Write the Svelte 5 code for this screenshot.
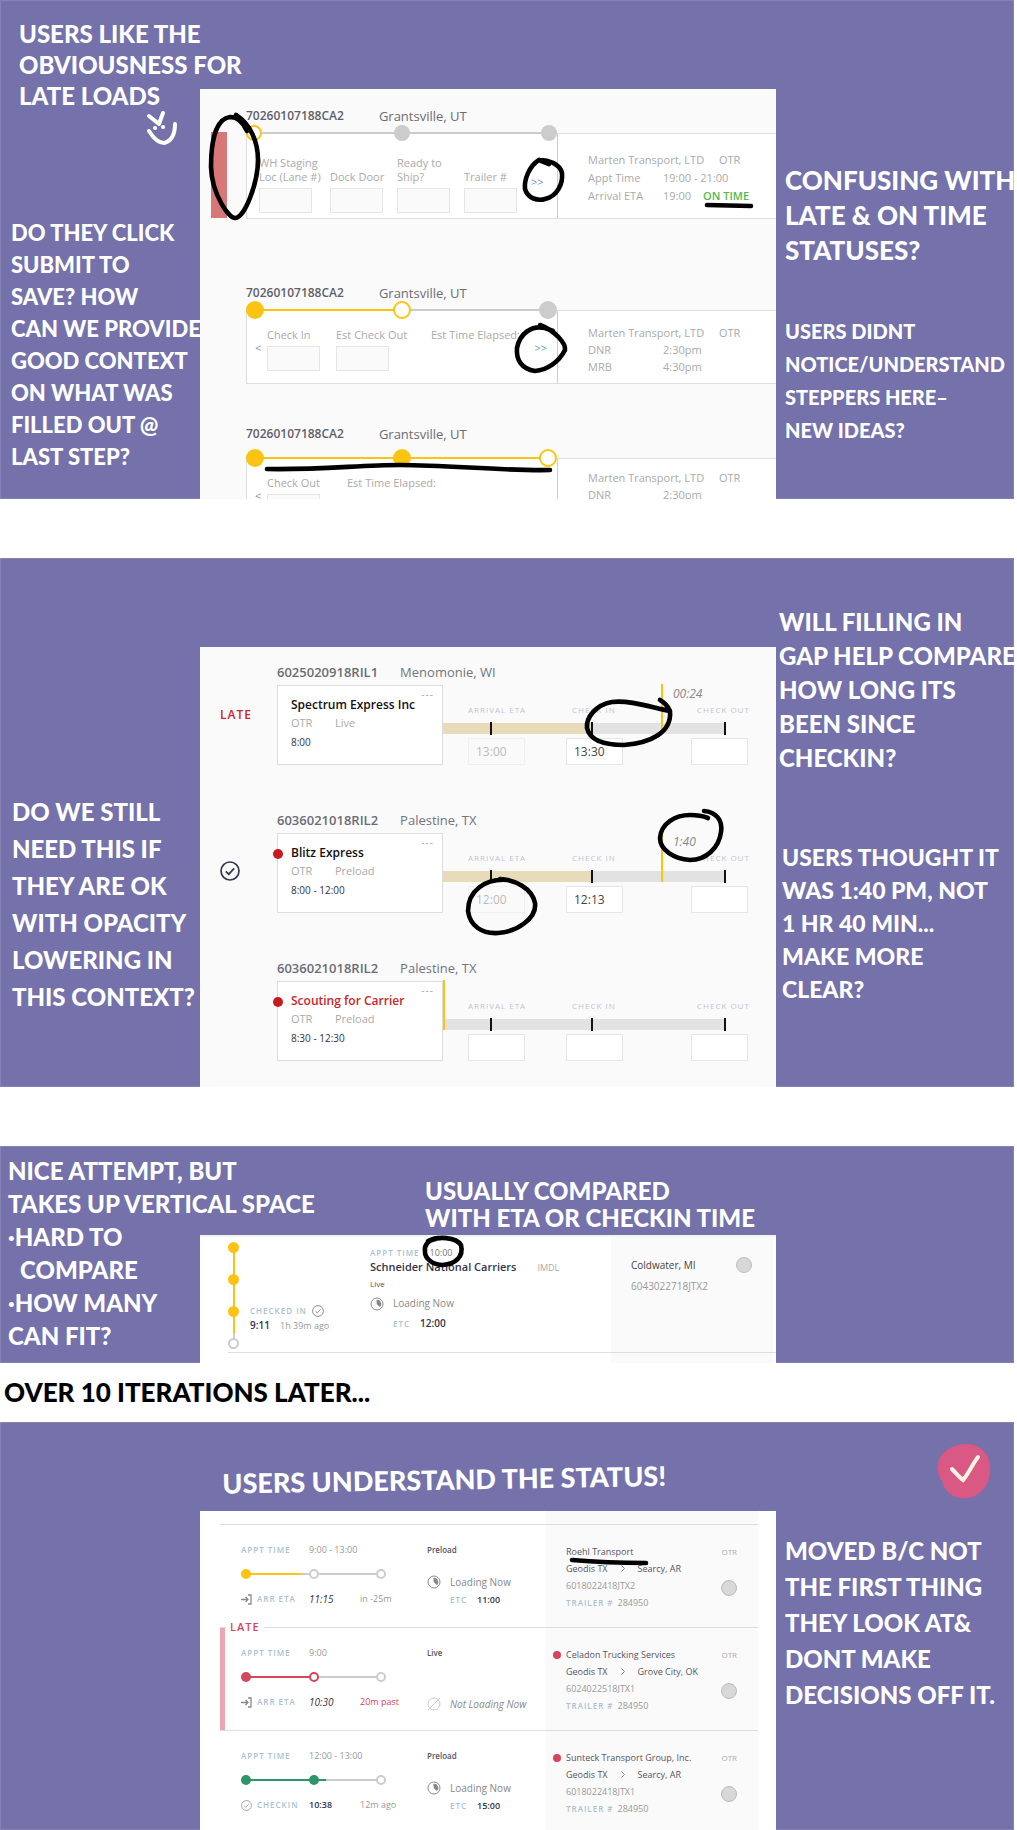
<script>
  const shipments = [
    {
      kind: 'staging', late: true, steps: ['open', 'idle', 'idle'], done: 0,
      fields: [
        { label: 'WH Staging\nLoc (Lane #)', input: true },
        { label: 'Dock Door', input: true },
        { label: 'Ready to\nShip?', input: true },
        { label: 'Trailer #', input: true }
      ],
      back: false, next: '>>',
      facts: [['Appt Time', '19:00 - 21:00', ''], ['Arrival ETA', '19:00', 'ON TIME']]
    },
    {
      kind: 'checkin', late: false, steps: ['full', 'open', 'idle'], done: 50,
      fields: [
        { label: 'Check In', input: true },
        { label: 'Est Check Out', input: true },
        { label: 'Est Time Elapsed:', input: false }
      ],
      back: true, next: '>>',
      facts: [['DNR', '2:30pm', ''], ['MRB', '4:30pm', '']]
    },
    {
      kind: 'checkout', late: false, steps: ['full', 'full', 'open'], done: 100,
      fields: [
        { label: 'Check Out', input: true },
        { label: 'Est Time Elapsed:', input: false }
      ],
      back: true, next: 'Done >>',
      facts: [['DNR', '2:30pm', '']]
    }
  ];

  const entries = [
    { id: '6025020918RIL1', place: 'Menomonie, WI', status: 'late', name: 'Spectrum Express Inc', mode: 'Live', time: '8:00', alert: false, scouting: false, fill: 149, now: 219, elapsed: '00:24', eta: '13:00', checkin: '13:30' },
    { id: '6036021018RIL2', place: 'Palestine, TX', status: 'ok', name: 'Blitz Express', mode: 'Preload', time: '8:00 - 12:00', alert: true, scouting: false, fill: 149, now: 219, elapsed: '1:40', eta: '12:00', checkin: '12:13' },
    { id: '6036021018RIL2', place: 'Palestine, TX', status: '', name: 'Scouting for Carrier', mode: 'Preload', time: '8:30 - 12:30', alert: true, scouting: true, fill: 0, now: 1, elapsed: '', eta: '', checkin: '' }
  ];
  const ticks = [48, 149, 282];

  const loads = [
    { late: false, tone: 'yellow', appt: '9:00 - 13:00', steps: ['full', 'idle', 'idle'], done: 40, event: 'ARR ETA', at: '11:15', est: true, delta: 'in -25m', mode: 'Preload', loading: true, etc: '11:00', carrier: 'Roehl Transport', alert: false, to: 'Searcy, AR', id: '6018022418JTX2' },
    { late: true, tone: 'red', appt: '9:00', steps: ['full', 'open', 'idle'], done: 50, event: 'ARR ETA', at: '10:30', est: true, delta: '20m past', mode: 'Live', loading: false, etc: '', carrier: 'Celadon Trucking Services', alert: true, to: 'Grove City, OK', id: '6024022518JTX1' },
    { late: false, tone: 'green', appt: '12:00 - 13:00', steps: ['full', 'full', 'idle'], done: 60, event: 'CHECKIN', at: '10:38', est: false, delta: '12m ago', mode: 'Preload', loading: true, etc: '15:00', carrier: 'Sunteck Transport Group, Inc.', alert: true, to: 'Searcy, AR', id: '6018022418JTX1' }
  ];
</script>

{#snippet note(lines)}
  {#each lines as line}<span>{line}</span>{/each}
{/snippet}

{#snippet checkIcon(size)}
  <svg class="icon" width={size} height={size} viewBox="0 0 20 20" aria-hidden="true">
    <circle cx="10" cy="10" r="9" /><path d="M5.8 10.4l3 2.8 5.4-5.8" />
  </svg>
{/snippet}

{#snippet clockIcon()}
  <svg class="icon clock" width="14" height="14" viewBox="0 0 14 14" aria-hidden="true">
    <circle cx="7" cy="7" r="6" /><path class="solid" d="M6.4 3A4 4 0 0 1 9.8 10L6.8 7.2z" />
  </svg>
{/snippet}

<main>
  <section class="board first">
    <div class="side">
      <p class="note large">{@render note(['USERS LIKE THE', 'OBVIOUSNESS FOR', 'LATE LOADS'])}</p>
      <p class="note submit">{@render note(['DO THEY CLICK', 'SUBMIT TO', 'SAVE? HOW', 'CAN WE PROVIDE', 'GOOD CONTEXT', 'ON WHAT WAS', 'FILLED OUT @', 'LAST STEP?'])}</p>
    </div>
    <div class="middle">
      <div class="lead"></div>
      <div class="panel shipments">
        {#each shipments as s}
          <article class="shipment {s.kind}">
            <h3><b>70260107188CA2</b><span>Grantsville, UT</span></h3>
            <div class="shipcard" class:late={s.late}>
              <div class="work">
                <div class="stepper">
                  <i class="line"><i style="width:{s.done}%"></i></i>
                  {#each s.steps as step}<i class="dot {step}"></i>{/each}
                </div>
                <div class="form">
                  {#if s.back}<button class="back" aria-label="Previous step">&lt;</button>{/if}
                  {#each s.fields as f}
                    {#if f.input}
                      <label class="field"><span>{f.label}</span><input type="text" /></label>
                    {:else}
                      <span class="field plain">{f.label}</span>
                    {/if}
                  {/each}
                  <button class="next">{s.next}</button>
                </div>
              </div>
              <div class="facts">
                <span class="wide">Marten Transport, LTD</span><span class="mode">OTR</span>
                {#each s.facts as [k, v, ok]}
                  <span>{k}</span><span class="val">{v}{#if ok}<b>{ok}</b>{/if}</span>
                {/each}
              </div>
            </div>
          </article>
        {/each}
      </div>
    </div>
    <div class="side">
      <p class="note confusing">{@render note(['CONFUSING WITH', 'LATE & ON TIME', 'STATUSES?'])}</p>
      <p class="note steppers">{@render note(['USERS DIDNT', 'NOTICE/UNDERSTAND', 'STEPPERS HERE–', 'NEW IDEAS?'])}</p>
    </div>
    <svg class="ink" aria-hidden="true">
      <path d="M247 131C243 122 237 117 230 117C214 119 211 147 211 167C212 195 229 218 235 218C245 218 258 182 258 160C258 141 250 124 236 115L248 127" />
      <path d="M539 160C529 166 524 180 525 189C528 199 538 201 545 199C558 196 563 183 562 173C560 164 549 160 539 160L549 164" />
      <path d="M707 205L751 206" />
      <path d="M540 325C556 331 566 344 565 350C559 362 547 370 535 371C521 369 516 359 517 348C520 333 532 325 545 328L553 331" />
      <path d="M267 469C320 470 360 465 400 465C450 465 500 471 550 470" />
      <g class="chalk">
        <path d="M149 116L159 124L163 113M149 131C154 139 159 143 164 143C172 141 175 133 175 124" />
        <path d="M155 128h.1M163 127h.1" />
      </g>
    </svg>
  </section>

  <section class="board second">
    <div class="side">
      <p class="note opacity">{@render note(['DO WE STILL', 'NEED THIS IF', 'THEY ARE OK', 'WITH OPACITY', 'LOWERING IN', 'THIS CONTEXT?'])}</p>
    </div>
    <div class="middle">
      <div class="lead"></div>
      <div class="panel entries">
        {#each entries as e}
          <article class="entry">
            <h3><b>{e.id}</b><span>{e.place}</span></h3>
            <div class="status">
              {#if e.status === 'late'}LATE{:else if e.status === 'ok'}{@render checkIcon(20)}{/if}
            </div>
            <div class="carrier" class:scouting={e.scouting}>
              {#if e.alert}<i class="alert"></i>{/if}
              <button class="more" aria-label="More options">---</button>
              <strong>{e.name}</strong>
              <p><span>OTR</span><span>{e.mode}</span></p>
              <time>{e.time}</time>
            </div>
            <div class="timeline">
              <div class="cells names"><span>ARRIVAL ETA</span><span>CHECK IN</span><span>CHECK OUT</span></div>
              <div class="bar">
                <i class="fill" style="width:{e.fill}px"></i>
                {#each ticks as t}<i class="tick" style="left:{t}px"></i>{/each}
                <i class="now" style="left:{e.now}px"></i>
                {#if e.elapsed}<em style="left:{e.now + 11}px">{e.elapsed}</em>{/if}
              </div>
              <div class="cells">
                <input class:dim={e.eta} aria-label="Arrival ETA" value={e.eta} />
                <input aria-label="Check in" value={e.checkin} />
                <input aria-label="Check out" />
              </div>
            </div>
          </article>
        {/each}
      </div>
    </div>
    <div class="side">
      <p class="note gap">{@render note(['WILL FILLING IN', 'GAP HELP COMPARE', 'HOW LONG ITS', 'BEEN SINCE', 'CHECKIN?'])}</p>
      <p class="note clear">{@render note(['USERS THOUGHT IT', 'WAS 1:40 PM, NOT', '1 HR 40 MIN...', 'MAKE MORE', 'CLEAR?'])}</p>
    </div>
    <svg class="ink" aria-hidden="true">
      <path d="M660 142Q667 146 670 153C650 149 630 142 612 144C595 147 586 160 587 170C590 183 605 187 624 187C650 185 672 175 670 153" />
      <path d="M704 253C716 254 723 262 721 274C719 290 706 302 690 302C674 301 660 292 660 280C661 265 676 257 690 257C697 257 703 258 708 260" />
      <path d="M508 322C485 320 468 333 468 353C470 368 482 376 498 375C517 374 537 360 535 345C532 330 515 322 500 321" />
    </svg>
  </section>

  <section class="board third">
    <div class="side">
      <p class="note attempt">{@render note(['NICE ATTEMPT, BUT', 'TAKES UP VERTICAL SPACE'])}<span class="point">·HARD TO</span><span class="point in">COMPARE</span><span class="point">·HOW MANY</span><span class="point">CAN FIT?</span></p>
    </div>
    <div class="middle">
      <div class="lead">
        <p class="note compared">{@render note(['USUALLY COMPARED', 'WITH ETA OR CHECKIN TIME'])}</p>
      </div>
      <div class="panel vertical">
        <div class="vsteps">
          <i class="vline"></i>
          <i class="dot full"></i><i class="dot full"></i><i class="dot full"></i><i class="dot idle"></i>
        </div>
        <div class="checked">
          <p class="key">CHECKED IN {@render checkIcon(12)}</p>
          <p><b>9:11</b><small>1h 39m ago</small></p>
        </div>
        <div class="freight">
          <p><span class="key">APPT TIME</span><small class="dark">10:00</small></p>
          <p class="title"><strong>Schneider National Carriers</strong><small>IMDL</small></p>
          <p class="live">Live</p>
          <p class="loading">{@render clockIcon()}<span>Loading Now</span></p>
          <p class="etc"><span class="key">ETC</span><b>12:00</b></p>
        </div>
        <div class="dest">
          <p>Coldwater, MI<i class="spot"></i></p>
          <span>6043022718JTX2</span>
        </div>
      </div>
    </div>
    <div class="side"></div>
    <svg class="ink" aria-hidden="true">
      <path d="M428 95C438 90 456 91 461 99C464 111 455 118 443 119C432 119 425 112 425 106C424 99 428 94 436 93" />
    </svg>
  </section>

  <p class="later">OVER 10 ITERATIONS LATER...</p>

  <section class="board fourth">
    <div class="side"></div>
    <div class="middle">
      <div class="lead">
        <h2 class="note understand">USERS UNDERSTAND THE STATUS!</h2>
      </div>
      <div class="panel loads">
        {#each loads as l}
          <article class="load {l.tone}" class:overdue={l.late}>
            {#if l.late}<strong class="flag">LATE</strong>{/if}
            <div class="visit">
              <span class="key">APPT TIME</span><span class="appt">{l.appt}</span>
              <div class="stepper small">
                <i class="line"><i style="width:{l.done}%"></i></i>
                {#each l.steps as step}<i class="dot {step}"></i>{/each}
              </div>
              <span class="key event">
                {#if l.est}
                  <svg class="icon" width="11" height="11" viewBox="0 0 11 11" aria-hidden="true"><path d="M0 5.5h7M4.5 3L7 5.5 4.5 8M7 1h3v9H7" /></svg>
                {:else}{@render checkIcon(11)}{/if}
                {l.event}
              </span>
              <b class:est={l.est}>{l.at}</b>
              <span class="delta">{l.delta}</span>
            </div>
            <div class="work-state">
              <strong>{l.mode}</strong>
              {#if l.loading}
                <p class="loading">{@render clockIcon()}<span>Loading Now</span></p>
                <p class="etc"><span class="key">ETC</span><b>{l.etc}</b></p>
              {:else}
                <p class="loading not">
                  <svg class="icon clock" width="14" height="14" viewBox="0 0 14 14" aria-hidden="true"><circle cx="7" cy="7" r="6" /><path d="M13 1L1 13" /></svg>
                  <em>Not Loading Now</em>
                </p>
              {/if}
            </div>
            <div class="haul">
              <div class="who">
                {#if l.alert}<i class="alert"></i>{/if}
                <p>{l.carrier}</p>
                <p class="route"><span>Geodis TX</span><svg class="icon" width="4" height="7" viewBox="0 0 4 7" aria-hidden="true"><path d="M.5 .5L3.5 3.5 .5 6.5" /></svg><span>{l.to}</span></p>
                <p class="id">{l.id}</p>
                <p class="id"><span class="key">TRAILER #</span>284950</p>
              </div>
              <div class="tag"><span>OTR</span><i class="spot"></i></div>
            </div>
          </article>
        {/each}
      </div>
    </div>
    <div class="side">
      <svg class="badge" width="54" height="56" viewBox="0 0 54 56" role="img" aria-label="Approved">
        <path class="blob" d="M15 4C28-2 47 0 52 17C56 31 50 52 31 55C16 57 7 48 5 38C-3 28-1 11 15 4Z" />
        <path class="tick-mark" d="M15 26C19 30 22 34 26 37C31 32 36 20 41 14" />
      </svg>
      <p class="note moved">{@render note(['MOVED B/C NOT', 'THE FIRST THING', 'THEY LOOK AT&', 'DONT MAKE', 'DECISIONS OFF IT.'])}</p>
    </div>
    <svg class="ink" aria-hidden="true"><path d="M572 138C595 140 620 141 646 141" /></svg>
  </section>
</main>

<style>
  :global(body) { margin: 0; background: #fff; }
  main { font-family: "Open Sans", "Noto Sans", sans-serif; font-size: 10px; color: #aaa; padding-right: 3px; overflow: hidden; }
  p, h2, h3 { margin: 0; font-weight: 400; }
  i { font-style: normal; display: block; }
  input { box-sizing: border-box; border: 1px solid #e6e6e6; border-radius: 0; background: #fafafa; font: inherit; }
  button { border: 0; background: none; padding: 0; font: inherit; color: #6f93c4; }

  .board { position: relative; display: grid; grid-template-columns: 200px minmax(0, 1fr) 238px; background: #7471ab; margin-bottom: 59px; overflow: hidden; box-shadow: inset 0 0 0 1px #8583b6; }
  .board.third { margin-bottom: 0; }
  .board.fourth { margin-bottom: 0; }
  .middle { display: flex; flex-direction: column; }
  .lead { height: 89px; box-sizing: border-box; }
  .panel { box-sizing: border-box; background: #fafafa; overflow: hidden; }
  .side { position: relative; z-index: 1; min-width: 0; }

  .note { font-family: Lato, "Open Sans", sans-serif; font-weight: 900; font-size: 24px; line-height: 33px; color: #fff; white-space: nowrap; }
  .note span { display: block; }
  .large { line-height: 31px; padding: 18px 0 0 19px; }
  .submit { line-height: 32px; font-size: 22px; padding: 106px 0 0 11px; }
  .confusing { font-size: 26px; line-height: 35px; padding: 163px 0 0 9px; }
  .steppers { font-size: 20px; padding: 47px 0 0 9px; }
  .opacity { line-height: 37px; padding: 235px 0 0 12px; }
  .gap { line-height: 34px; padding: 47px 0 0 3px; }
  .clear { font-size: 23px; padding: 66px 0 0 6px; }
  .attempt { padding: 8px 0 0 8px; }
  .point.in { padding-left: 12px; }
  .compared { line-height: 27px; padding: 31px 0 0 225px; }
  .understand { font-size: 27px; line-height: 36px; padding: 39px 0 0 22px; transform: rotate(-1deg); }
  .moved { line-height: 36px; padding: 34px 0 0 9px; }
  .later { font-family: Lato, "Open Sans", sans-serif; font-weight: 900; font-size: 26px; line-height: 59px; color: #000; padding-left: 4px; }

  .ink { position: absolute; top: 0; left: 0; width: 100%; height: 100%; z-index: 2; pointer-events: none; fill: none; stroke: #000; stroke-width: 4.6; stroke-linecap: round; stroke-linejoin: round; }
  .chalk { stroke: #fff; stroke-width: 4; }
  .icon { fill: none; stroke: #8a8a8a; stroke-width: 1; flex: none; }

  .dot { position: relative; box-sizing: border-box; width: 18px; height: 18px; border-radius: 50%; background: #ccc; }
  .dot.full { background: #fbc412; }
  .dot.open { background: #fff; border: 2px solid #fbc412; }
  .stepper { position: relative; display: flex; justify-content: space-between; align-items: center; }
  .stepper > .line { position: absolute; left: 8px; right: 8px; top: 50%; height: 2px; margin-top: -1px; background: #ccc; }
  .line > i { height: 100%; background: #fbc412; }

  .first .panel { height: 410px; }
  .shipments { padding: 18px 0 0 46px; font-size: 11px; }
  .shipments h3 { display: flex; gap: 35px; font-size: 12px; line-height: 18px; color: #6c6c74; }
  .shipments h3 span { font-size: 13px; }
  h3 b { font-weight: 600; }
  .shipcard { position: relative; display: grid; grid-template-columns: 311px minmax(0, 1fr); background: #fff; border: 1px solid #dedede; border-right: 0; box-sizing: border-box; }
  .shipcard.late::before { content: ""; position: absolute; right: 100%; top: -2px; bottom: 0; width: 16px; margin-right: 20px; background: #d77777; }
  .staging .shipcard { height: 86px; margin: 8px 0 65px; }
  .checkin .shipcard { height: 74px; margin: 8px 0 41px; }
  .checkout .shipcard { height: 74px; margin-top: 15px; }
  .work { border-right: 1px solid #ccc; }
  .work .stepper { margin: -10px 0 0 -1px; height: 18px; }
  .staging .work .dot { width: 16px; height: 16px; }
  .form { display: flex; align-items: flex-start; padding-left: 20px; }
  .checkin .form, .checkout .form { padding-left: 8px; padding-top: 9px; }
  .field { display: flex; flex-direction: column; justify-content: flex-end; line-height: 14px; width: 53px; margin-right: 16px; white-space: pre; }
  .field input { width: 53px; height: 25px; margin-top: 4px; }
  .staging .form { padding: 10px 0 0 12px; }
  .staging .field { height: 61px; margin-right: 14px; }
  .staging .field:first-child { margin-right: 18px; }
  .plain { padding-left: 26px; width: auto; margin-right: 0; }
  .checkout .plain { padding-left: 11px; }
  .back { width: 6px; margin: 13px 6px 0 0; line-height: 14px; }
  .next { line-height: 14px; margin: 13px 10px 0 auto; }
  .checkin .next { margin-left: 0; position: relative; margin-right: 10px; margin-left: auto; }
  .staging .next { margin: 23px 16px 0 auto; }
  .checkout .next { font-weight: 600; margin: 20px 20px 0 auto; }
  .facts { display: grid; grid-template-columns: 75px 56px 1fr; grid-auto-rows: 17px; align-content: start; line-height: 17px; padding: 13px 0 0 30px; white-space: nowrap; }
  .wide { grid-column: 1 / 3; }
  .staging .facts { padding-top: 17px; row-gap: 1px; }
  .checkout .facts { padding-top: 10px; }
  .val { grid-column: 2 / 4; }
  .val b { color: #55b84c; font-weight: 600; margin-left: 12px; }

  .second .panel { height: 440px; }
  .entries { padding: 15px 28px 0 20px; }
  .entry { display: grid; grid-template-columns: 57px 166px minmax(0, 1fr); height: 148px; align-content: start; }
  .entry h3 { grid-column: 2 / 4; display: flex; gap: 22px; font-size: 13px; line-height: 20px; margin-bottom: 3px; color: #74747c; }
  .status { color: #c9252b; font-size: 12px; font-weight: 600; letter-spacing: 1px; line-height: 14px; padding-top: 23px; }
  .status .icon { stroke: #33384a; stroke-width: 1.7; margin-top: 5px; }
  .carrier { position: relative; box-sizing: border-box; height: 80px; background: #fff; border: 1px solid #ddd; padding: 9px 13px; font-size: 11px; line-height: 17px; display: flex; flex-direction: column; white-space: nowrap; }
  .carrier strong { color: #111; font-weight: 600; line-height: 19px; font-size: 12px; }
  .carrier.scouting strong { color: #c9252b; }
  .carrier p span { display: inline-block; min-width: 44px; }
  .carrier time { color: #333; font-size: 10px; line-height: 22px; }
  .alert { position: absolute; left: -5px; top: 15px; width: 10px; height: 10px; border-radius: 50%; background: #c9191e; }
  .more { position: absolute; right: 8px; top: 1px; line-height: 14px; color: #aaa; font-size: 10px; letter-spacing: 1px; }
  .timeline { padding-top: 19px; }
  .cells { display: grid; grid-template-columns: 98px 125px 57px; padding-left: 25px; }
  .names { font-size: 8px; line-height: 12px; letter-spacing: 1px; color: #bcc5d6; white-space: nowrap; }
  .names span:nth-child(n + 2) { padding-left: 6px; }
  .bar { position: relative; width: 282px; height: 11px; background: #e2e2e2; margin: 7px 0 4px; }
  .fill { height: 100%; background: #e8dbb9; }
  .tick, .now { position: absolute; top: -1px; width: 2px; height: 13px; background: #111; margin-left: -1px; }
  .now { top: -39px; height: 50px; background: #fbc412; }
  .bar em { position: absolute; top: -37px; font-size: 12px; line-height: 16px; color: #888; }
  .cells input { width: 57px; height: 27px; padding: 0 7px; background: #fff; font-size: 12px; color: #444; }
  .cells .dim { background: #fafafa; border-color: #f0f0f0; color: #bbb; }

  .key { color: #a9c1d2; font-weight: 600; font-size: 8px; letter-spacing: 1px; }
  b { font-weight: 600; }
  small { font-size: 9px; }
  .panel .spot { box-sizing: border-box; width: 16px; height: 16px; border-radius: 50%; background: #d8d8d8; border: 1px solid #bbb; }
  .vertical { display: grid; grid-template-columns: 22px 120px minmax(0, 1fr) 162px; background: #fff; height: 128px; padding: 0 3px 0 28px; border-top: 2px solid #f3f3f5; background-image: linear-gradient(#ddd, #ddd); background-size: calc(100% - 28px) 1px; background-position: right 115px; background-repeat: no-repeat; }
  .vsteps { position: relative; display: flex; flex-direction: column; gap: 21px; padding-top: 5px; }
  .vsteps .dot { width: 11px; height: 11px; }
  .dot.idle { background: #ccc; }
  .vsteps .idle { background: #fff; border: 2px solid #ccc; }
  .vline { position: absolute; top: 12px; left: 5px; width: 2px; height: 84px; background: #fbc412; border-bottom: 8px solid #ccc; }
  .checked { padding-top: 67px; line-height: 14px; color: #999; white-space: nowrap; }
  .checked .key { display: flex; gap: 5px; align-items: center; }
  .checked .icon { stroke-width: 1.6; }
  .checked b { display: inline-block; width: 30px; }
  .panel b { color: #33354a; }
  .panel .shipment h3 b { color: #5f5f69; }
  .panel .entry h3 b { color: #6c6c76; }
  .panel .val b { color: #55b84c; }
  .freight { padding-top: 8px; line-height: 14px; white-space: nowrap; }
  .freight .key + .dark { margin-left: 10px; color: #777; }
  .title strong { color: #33354a; font-size: 11px; font-weight: 600; }
  .title small { margin-left: 21px; }
  .live { color: #555; font-size: 8px; line-height: 17px; }
  .loading { display: flex; align-items: center; gap: 9px; color: #888; }
  .clock .solid { fill: #888; stroke: none; }
  .etc { padding-left: 23px; display: flex; gap: 10px; align-items: center; }
  .freight .loading { line-height: 23px; }
  .freight .etc { line-height: 17px; }
  .dest { background: #fafafa; padding: 20px 21px 0 20px; color: #999; background-image: linear-gradient(#ddd, #ddd); background-size: 100% 1px; background-position: 0 115px; background-repeat: no-repeat; }
  .dest p { display: flex; justify-content: space-between; color: #444; line-height: 16px; margin-bottom: 6px; }
  .dest span { line-height: 14px; }

  .loads { background: #fff; height: 319px; padding: 13px 18px 0 20px; background-image: linear-gradient(#fafafa, #fafafa); background-size: 212px 100%; background-position: right 18px top; background-repeat: no-repeat; }
  .load { position: relative; box-sizing: border-box; display: grid; grid-template-columns: 207px minmax(0, 1fr) 212px; height: 103px; border-top: 1px solid #ddd; }
  .overdue::before { content: ""; position: absolute; left: 0; top: 0; bottom: 0; width: 5px; background: #eba7b0; }
  .flag { position: absolute; left: 6px; top: -8px; background: #fff; padding: 0 4px; line-height: 14px; font-size: 11px; font-weight: 600; letter-spacing: 1px; color: #d5455b; }
  .visit { display: grid; grid-template-columns: 68px 51px 1fr; align-content: start; align-items: center; padding: 18px 0 0 21px; line-height: 14px; white-space: nowrap; }
  .appt { grid-column: 2 / 4; font-size: 9px; color: #999; }
  .small { grid-column: 1 / 4; width: 145px; height: 10px; margin: 12px 0 13px; }
  .small .dot { width: 10px; height: 10px; }
  .small .idle { background: #fff; border: 2px solid #ccc; }
  .event { display: flex; align-items: center; gap: 5px; }
  .visit b { font-size: 9px; }
  .visit b.est { font-size: 10px; font-style: italic; font-weight: 400; }
  .delta { font-size: 9px; color: #999; }
  .red .delta { color: #d5455b; }
  .red .dot.full, .red .line > i { background: #d5455b; }
  .red .dot.open { border-color: #d5455b; }
  .green .dot.full, .green .line > i { background: #2f9567; }
  .event .icon { stroke-width: 1.3; }
  .work-state { padding-top: 18px; line-height: 14px; white-space: nowrap; }
  .work-state strong { display: block; color: #555564; font-size: 8px; font-weight: 600; }
  .work-state .loading { margin-top: 17px; line-height: 16px; }
  .work-state .etc { line-height: 19px; }
  .work-state b { font-size: 9px; }
  .work-state .not { margin-top: 36px; }
  .not .clock { stroke: #ccc; }
  .haul { display: flex; justify-content: space-between; padding: 18px 21px 0 20px; line-height: 17px; color: #555564; }
  .who { position: relative; font-size: 9px; white-space: nowrap; }
  .who .alert { left: -13px; top: 5px; width: 8px; height: 8px; background: #d5455b; }
  .route { display: flex; align-items: center; gap: 13px; }
  .id { color: #999; font-size: 9px; }
  .id .key { margin-right: 4px; }
  .tag { display: flex; flex-direction: column; align-items: flex-end; gap: 20px; font-size: 8px; color: #aaa; }
  .badge { display: block; margin: 21px 0 0 161px; }
  .blob { fill: #d95884; }
  .tick-mark { fill: none; stroke: #fff5e3; stroke-width: 4; stroke-linecap: round; }
</style>
